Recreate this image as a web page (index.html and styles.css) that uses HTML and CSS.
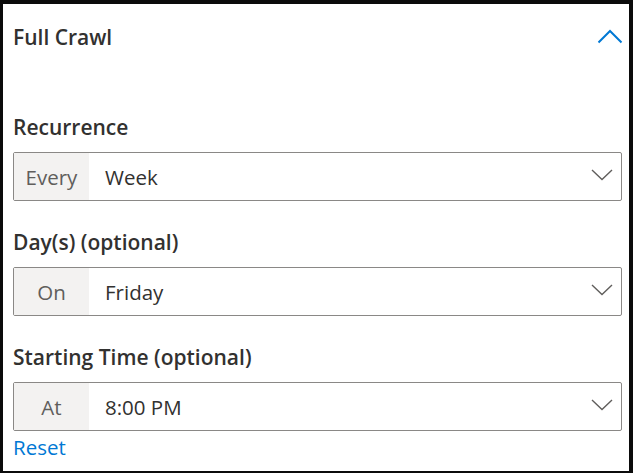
FILE: index.html
```html
<!DOCTYPE html>
<html>
<head>
<meta charset="utf-8">
<link rel="stylesheet" href="styles.css">
</head>
<body>
<div class="panel">
  <div class="header">
    <span class="title">Full Crawl</span>
    <svg class="chev-up" width="26" height="15" viewBox="0 0 26 15"><path d="M1.5 13.5 L13 2 L24.5 13.5" fill="none" stroke="#0078d4" stroke-width="2"/></svg>
  </div>
  <div class="field first">
    <div class="label">Recurrence</div>
    <div class="box">
      <div class="prefix">Every</div>
      <div class="value">Week</div>
      <svg class="chev-down" width="22" height="12" viewBox="0 0 22 12"><path d="M1 1 L11 10.5 L21 1" fill="none" stroke="#605e5c" stroke-width="1.4"/></svg>
    </div>
  </div>
  <div class="field">
    <div class="label">Day(s) (optional)</div>
    <div class="box">
      <div class="prefix">On</div>
      <div class="value">Friday</div>
      <svg class="chev-down" width="22" height="12" viewBox="0 0 22 12"><path d="M1 1 L11 10.5 L21 1" fill="none" stroke="#605e5c" stroke-width="1.4"/></svg>
    </div>
  </div>
  <div class="field">
    <div class="label">Starting Time (optional)</div>
    <div class="box">
      <div class="prefix">At</div>
      <div class="value">8:00 PM</div>
      <svg class="chev-down" width="22" height="12" viewBox="0 0 22 12"><path d="M1 1 L11 10.5 L21 1" fill="none" stroke="#605e5c" stroke-width="1.4"/></svg>
    </div>
  </div>
  <a class="reset">Reset</a>
</div>
</body>
</html>
```
FILE: styles.css
```css
html, body {
  margin: 0;
  padding: 0;
  background: #0b0b0b;
}
body {
  width: 633px;
  height: 473px;
  overflow: hidden;
  font-family: "Open Sans", "Noto Sans", sans-serif;
  color: #323130;
}
.panel {
  margin: 4px 4px 0 3px;
  height: 467px;
  background: #ffffff;
  padding: 0 7px 0 10px;
  box-sizing: border-box;
  display: flex;
  flex-direction: column;
}
.header {
  display: flex;
  align-items: center;
  justify-content: space-between;
  padding-top: 19px;
  height: 28px;
}
.title {
  font-size: 21px;
  font-weight: 600;
  line-height: 28px;
}
.chev-up {
  margin-right: -1px;
  margin-top: -2px;
}
.field {
  display: flex;
  flex-direction: column;
  margin-top: 27px;
}
.field.first {
  margin-top: 62px;
}
.label {
  font-size: 21px;
  font-weight: 600;
  line-height: 28px;
  margin-bottom: 11px;
}
.box {
  display: flex;
  align-items: center;
  height: 49px;
  box-sizing: border-box;
  border: 1px solid #8a8886;
  border-radius: 2px;
  font-size: 20.5px;
}
.prefix {
  width: 75px;
  align-self: stretch;
  background: #f3f2f1;
  color: #605e5c;
  display: flex;
  align-items: center;
  justify-content: center;
}
.value {
  flex: 1;
  padding-left: 16px;
  color: #323130;
}
.chev-down {
  margin-right: 8px;
  margin-top: -3px;
}
.reset {
  font-size: 20.5px;
  line-height: 28px;
  margin-top: 2px;
  color: #0078d4;
  align-self: flex-start;
}
```
